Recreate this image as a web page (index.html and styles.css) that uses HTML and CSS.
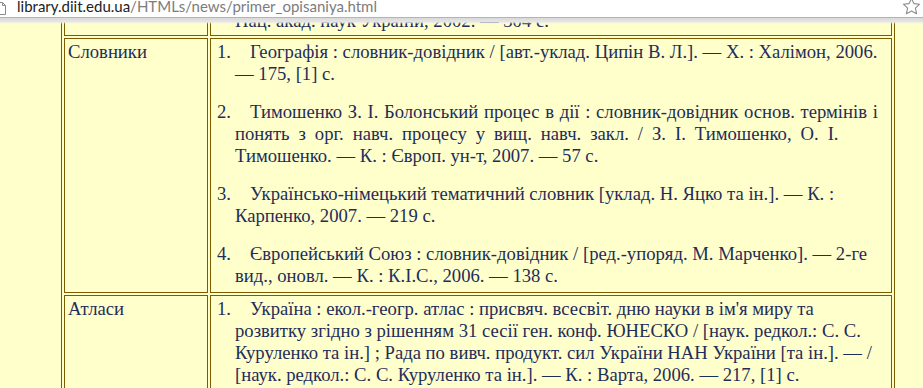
FILE: index.html
```html
<!DOCTYPE html>
<html lang="uk">
<head>
<meta charset="utf-8">
<title>primer_opisaniya</title>
<link rel="stylesheet" href="styles.css">
</head>
<body>
<div class="chrome">
  <div class="omnibox">
    <div class="url">
      <svg class="page-icon" width="6" height="14" viewBox="0 0 6 14"><path d="M-6 1.5 H2.5 L5.5 4.5 V13.5 H-6" fill="#fff" stroke="#8a8a8a" stroke-width="1"/><path d="M2.5 1.5 V4.5 H5.5" fill="none" stroke="#8a8a8a" stroke-width="1"/></svg>
      <span class="host">library.diit.edu.ua</span><span class="path">/HTMLs/news/primer_opisaniya.html</span>
    </div>
    <svg class="star" width="19" height="16" viewBox="0 0 19 16"><path d="M9.5 -1.5 L11.9 3.6 L17.6 4.2 L13.4 8.1 L14.6 13.7 L9.5 10.9 L4.4 13.7 L5.6 8.1 L1.4 4.2 L7.1 3.6 Z" fill="#fff" stroke="#8c8c8c" stroke-width="1.1" stroke-linejoin="round"/></svg>
  </div>
  <div class="band"></div>
</div>
<div class="viewport">
  <table class="biblio">
    <tr class="prev">
      <td class="kind">&nbsp;</td>
      <td class="items">
        <p class="item">Наукова думка : енциклопедичне видання / ред. кол.: Б. Є. Патон [та ін.]. — К. : Нац. акад. наук України, 2002. — 304 с.</p>
      </td>
    </tr>
    <tr>
      <td class="kind">Словники</td>
      <td class="items">
        <p class="item"><span class="num">1.</span>Географія : словник-довідник / [авт.-уклад. Ципін В. Л.]. — Х. : Халімон, 2006. — 175, [1] с.</p>
        <p class="item"><span class="num">2.</span><span class="ws1">Тимошенко З. І. Болонський процес в дії : словник-довідник основ. термінів і</span><br><span class="ws2">понять з орг. навч. процесу у вищ. навч. закл. / З. І. Тимошенко, О. І.</span><br>Тимошенко. — К. : Європ. ун-т, 2007. — 57 с.</p>
        <p class="item"><span class="num">3.</span>Українсько-німецький тематичний словник [уклад. Н. Яцко та ін.]. — К. : Карпенко, 2007. — 219 с.</p>
        <p class="item"><span class="num">4.</span>Європейський Союз : словник-довідник / [ред.-упоряд. М. Марченко]. — 2-ге вид., оновл. — К. : К.І.С., 2006. — 138 с.</p>
      </td>
    </tr>
    <tr>
      <td class="kind">Атласи</td>
      <td class="items">
        <p class="item"><span class="num">1.</span>Україна : екол.-геогр. атлас : присвяч. всесвіт. дню науки в ім'я миру та розвитку згідно з рішенням 31 сесії ген. конф. ЮНЕСКО / [наук. редкол.: С. С. Куруленко та ін.] ; Рада по вивч. продукт. сил України НАН України [та ін.]. — / [наук. редкол.: С. С. Куруленко та ін.]. — К. : Варта, 2006. — 217, [1] с.</p>
        <p class="item"><span class="num">2.</span>Атлас автомобільних доріг України. — К. : ДНВП «Картографія», 2007. — 96 с.</p>
      </td>
    </tr>
  </table>
</div>
</body>
</html>
```
FILE: styles.css
```css
html, body {
  margin: 0;
  padding: 0;
  background: #ffffcc;
}
body {
  width: 923px;
  height: 388px;
  overflow: hidden;
}
.chrome {
  position: fixed;
  top: 0;
  left: 0;
  right: 0;
  z-index: 10;
}
.omnibox {
  height: 17px;
  background: #ffffff;
  display: flex;
  align-items: flex-start;
  justify-content: space-between;
  overflow: hidden;
}
.band {
  height: 6px;
  border-top: 1px solid #b5b5b5;
  background: linear-gradient(#d9d9d9 0%, #e6e6e6 65%, rgba(236, 236, 236, 0.5) 85%, rgba(240, 240, 240, 0) 100%);
}
.url {
  display: flex;
  align-items: flex-start;
  font-family: Lato, "Noto Sans", sans-serif;
  font-size: 15px;
  line-height: 17px;
  margin-top: -2px;
  white-space: nowrap;
}
.page-icon {
  margin-top: 3px;
  margin-right: 11px;
}
.host {
  color: #222222;
}
.path {
  color: #7c7c7c;
}
.star {
  margin-right: 2px;
}
.viewport {
  height: 388px;
  overflow: hidden;
}
.biblio {
  margin-left: 61px;
  margin-top: -18px;
  width: 834px;
  border: 1px solid #7d5c00;
  border-spacing: 2px;
  border-collapse: separate;
  font-family: "Liberation Serif", "Times New Roman", serif;
  font-size: 18.67px;
  color: #1f2d5a;
  table-layout: fixed;
}
.biblio td {
  border: 1px solid #7d5c00;
  vertical-align: top;
  padding: 2px 3px 5px 3px;
}
.biblio .prev td {
  padding-bottom: 3px;
}
.biblio td.kind {
  width: 136px;
}
.item {
  margin: 0 6px 16px 21px;
  text-indent: -18px;
  line-height: normal;
}
.item:last-child {
  margin-bottom: 0;
}
.num {
  display: inline-block;
  width: 33px;
  text-indent: 0;
}
.ws1 {
  word-spacing: 1px;
}
.ws2 {
  word-spacing: 4.3px;
}
```
